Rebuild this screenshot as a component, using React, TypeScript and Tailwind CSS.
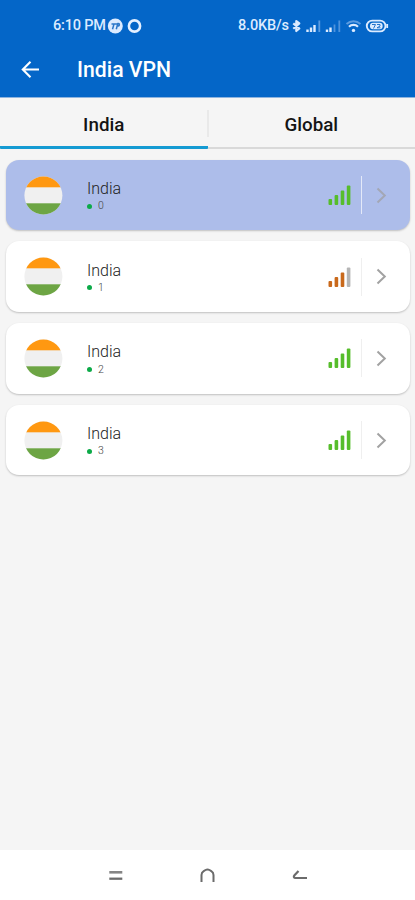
import { useState } from "react";
import clsx from "clsx";

interface Server {
  id: number;
  country: string;
  strength: number;
}

const servers: Server[] = [
  { id: 0, country: "India", strength: 4 },
  { id: 1, country: "India", strength: 3 },
  { id: 2, country: "India", strength: 4 },
  { id: 3, country: "India", strength: 4 },
];

const StatusBar = () => (
  <div className="flex h-[47px] items-center pt-[4px] pl-[53px] text-[14.5px] font-medium text-[#dcebff]">
    <span className="w-[54px] whitespace-nowrap tracking-[-0.2px]">6:10 PM</span>
    <svg width="36" height="16" viewBox="0 0 36 16" fill="none">
      <circle cx="8.3" cy="8" r="7.5" fill="#dcebff" />
      <path d="M4.5 6h6.3M7 6l-1.5 5.3M9.3 11.3L10.8 5.5c2-.5 2.4 2.6-.8 2.7" stroke="#2c78ca" strokeWidth="1.5" />
      <circle cx="27.5" cy="8" r="5.6" stroke="#e5f0ff" strokeWidth="2.6" />
    </svg>
    <span className="ml-[95px] w-[53px] whitespace-nowrap tracking-[-0.15px]">8.0KB/s</span>
    <svg width="98" height="16" viewBox="0 0 98 16" fill="none" stroke="#dcebff">
      {/* bluetooth */}
      <path d="M2.3 5.3l6 5.2-3 2.5V3l3 2.4-6 5.3" strokeWidth="2.2" strokeLinejoin="round" />
      {/* sim signals */}
      <path d="M16.5 11.5V14M20 9.5V14M23.5 7V14" strokeWidth="2.4" />
      <path d="M28.3 2.5V14" stroke="#5b9be0" strokeWidth="1.8" />
      <path d="M36 11.5V14M39.5 9.5V14" strokeWidth="2.4" />
      <path d="M43.5 6.5V14M48.3 2.5V14" stroke="#4f93dc" strokeWidth="1.8" />
      {/* wifi */}
      <path d="M55.5 6c4-3.7 10-3.7 14 0" stroke="#5b9be0" strokeWidth="1.9" />
      <path d="M58 8.7c2.5-2.4 6.5-2.4 9 0" strokeWidth="2.2" />
      <circle cx="62.5" cy="12.4" r="1.7" fill="#dcebff" stroke="none" />
      {/* battery */}
      <rect x="75.8" y="2.6" width="18.7" height="10.8" rx="5.4" strokeWidth="1.9" />
      <path d="M96.2 6v4" strokeWidth="1.8" />
      <rect x="79" y="4.8" width="12.6" height="6.5" rx="3" fill="#dcebff" stroke="none" />
      <path d="M81 6.5h3.5l-2 4M86 6.5h3v1.6l-3 1.7h3.5" stroke="#2674cb" strokeWidth="1" />
    </svg>
  </div>
);

const IndiaFlag = () => (
  <svg width="39" height="39" viewBox="0 0 39 39">
    <clipPath id="flag">
      <circle cx="19.4" cy="19.5" r="19" />
    </clipPath>
    <g clipPath="url(#flag)">
      <rect width="39" height="39" fill="#f0f0f0" />
      <rect width="39" height="11.3" fill="#ff9811" />
      <rect y="27.3" width="39" height="12" fill="#6da544" />
    </g>
  </svg>
);

const SignalBars = ({ strength }: { strength: number }) => {
  const color = strength === 4 ? "#56bd2b" : "#c9691b";
  return (
    <svg width="23" height="20" viewBox="0 0 23 20">
      {[6, 10, 14.5, 19.5].map((height, i) => (
        <rect
          key={height}
          x={i * 6.1 + 0.5}
          y={20 - height}
          width="3.6"
          height={height}
          rx="1"
          fill={i < strength ? color : "#b5b5b5"}
        />
      ))}
    </svg>
  );
};

const ServerCard = ({ server, selected, onSelect }: { server: Server; selected: boolean; onSelect: () => void }) => (
  <button
    onClick={onSelect}
    className={clsx(
      "flex h-[70.7px] w-full items-center rounded-[13px] pl-[18px] text-left shadow-[0_1px_2px_rgba(0,0,0,0.22)]",
      selected ? "bg-[#adbdea]" : "bg-white"
    )}
  >
    <IndiaFlag />
    <div className="ml-6 flex-1">
      <div className="mt-[3px] text-[16px] leading-[19px] font-light text-[#222]">{server.country}</div>
      <div className="flex h-[16px] items-center text-[10.5px] font-light text-[#444]">
        <span className="mr-[6px] h-[5px] w-[5px] rounded-full bg-[#0caa48]" />
        {server.id}
      </div>
    </div>
    <SignalBars strength={server.strength} />
    <div className={clsx("ml-[10px] h-[38px] w-[1.5px]", selected ? "bg-[#e4e9f8]" : "bg-[#efefef]")} />
    <svg className="mr-[23px] ml-[14px]" width="11" height="17" viewBox="0 0 11 17" fill="none">
      <path d="M1.5 1.5l7.3 7-7.3 7" stroke={selected ? "#a3a7b5" : "#a2a2a2"} strokeWidth="2" />
    </svg>
  </button>
);

const NavigationBar = () => (
  <nav className="h-[50px] bg-white">
    <svg width="415" height="50" viewBox="0 0 415 50" fill="none" stroke="#6b6b6b" strokeWidth="2">
      <path d="M109.3 22.3h13" stroke="#858585" strokeWidth="2.6" />
      <path d="M109.3 28.7h13" strokeWidth="2.3" />
      <path d="M201.5 32v-7c0-1.8.7-3 2.2-3.9l1.8-1.1c1.4-.8 2.6-.8 4 0l1.8 1.1c1.5.9 2.2 2.1 2.2 3.9v7" />
      <path d="M298.5 21l-4 4.2c-1.3 1.5-.6 2.8 1 2.8H307" strokeWidth="2.2" />
    </svg>
  </nav>
);

const App = () => {
  const [tab, setTab] = useState("India");
  const [selected, setSelected] = useState(0);

  return (
    <div className="flex h-[900px] w-[415px] flex-col bg-[#f5f5f5] font-[Roboto,sans-serif]">
      <header className="h-[98px] border-b border-[#8eb4df] bg-[#0466c8] text-white">
        <StatusBar />
        <div className="flex h-[45px] items-center pl-[21px]">
          <svg width="19" height="18" viewBox="0 0 19 18" fill="none" stroke="white" strokeWidth="2.1">
            <path d="M18 8.5H2M9.5 .8L1.8 8.5l7.7 7.7" />
          </svg>
          <h1 className="ml-[37px] text-[21.2px] font-medium">India VPN</h1>
        </div>
      </header>

      <div className="relative flex h-[51px] border-b-2 border-[#d9d9d9]">
        {["India", "Global"].map(name => (
          <button
            key={name}
            onClick={() => setTab(name)}
            className={clsx(
              "-mb-[2px] h-[51px] w-1/2 border-b-[3.5px] pt-[6px] text-[18.8px] font-medium text-[#141414]",
              tab === name ? "rounded-b-[1px] border-[#159bd3]" : "border-transparent"
            )}
          >
            {name}
          </button>
        ))}
        <div className="absolute top-[12px] left-[207px] h-[27px] w-[1.5px] bg-[#e9e9e9]" />
      </div>

      <main className="flex flex-1 flex-col gap-[11px] pt-[10.7px] pr-[5px] pl-[6px]">
        {servers.map(server => (
          <ServerCard
            key={server.id}
            server={server}
            selected={selected === server.id}
            onSelect={() => setSelected(server.id)}
          />
        ))}
      </main>

      <NavigationBar />
    </div>
  );
};

export default App;
